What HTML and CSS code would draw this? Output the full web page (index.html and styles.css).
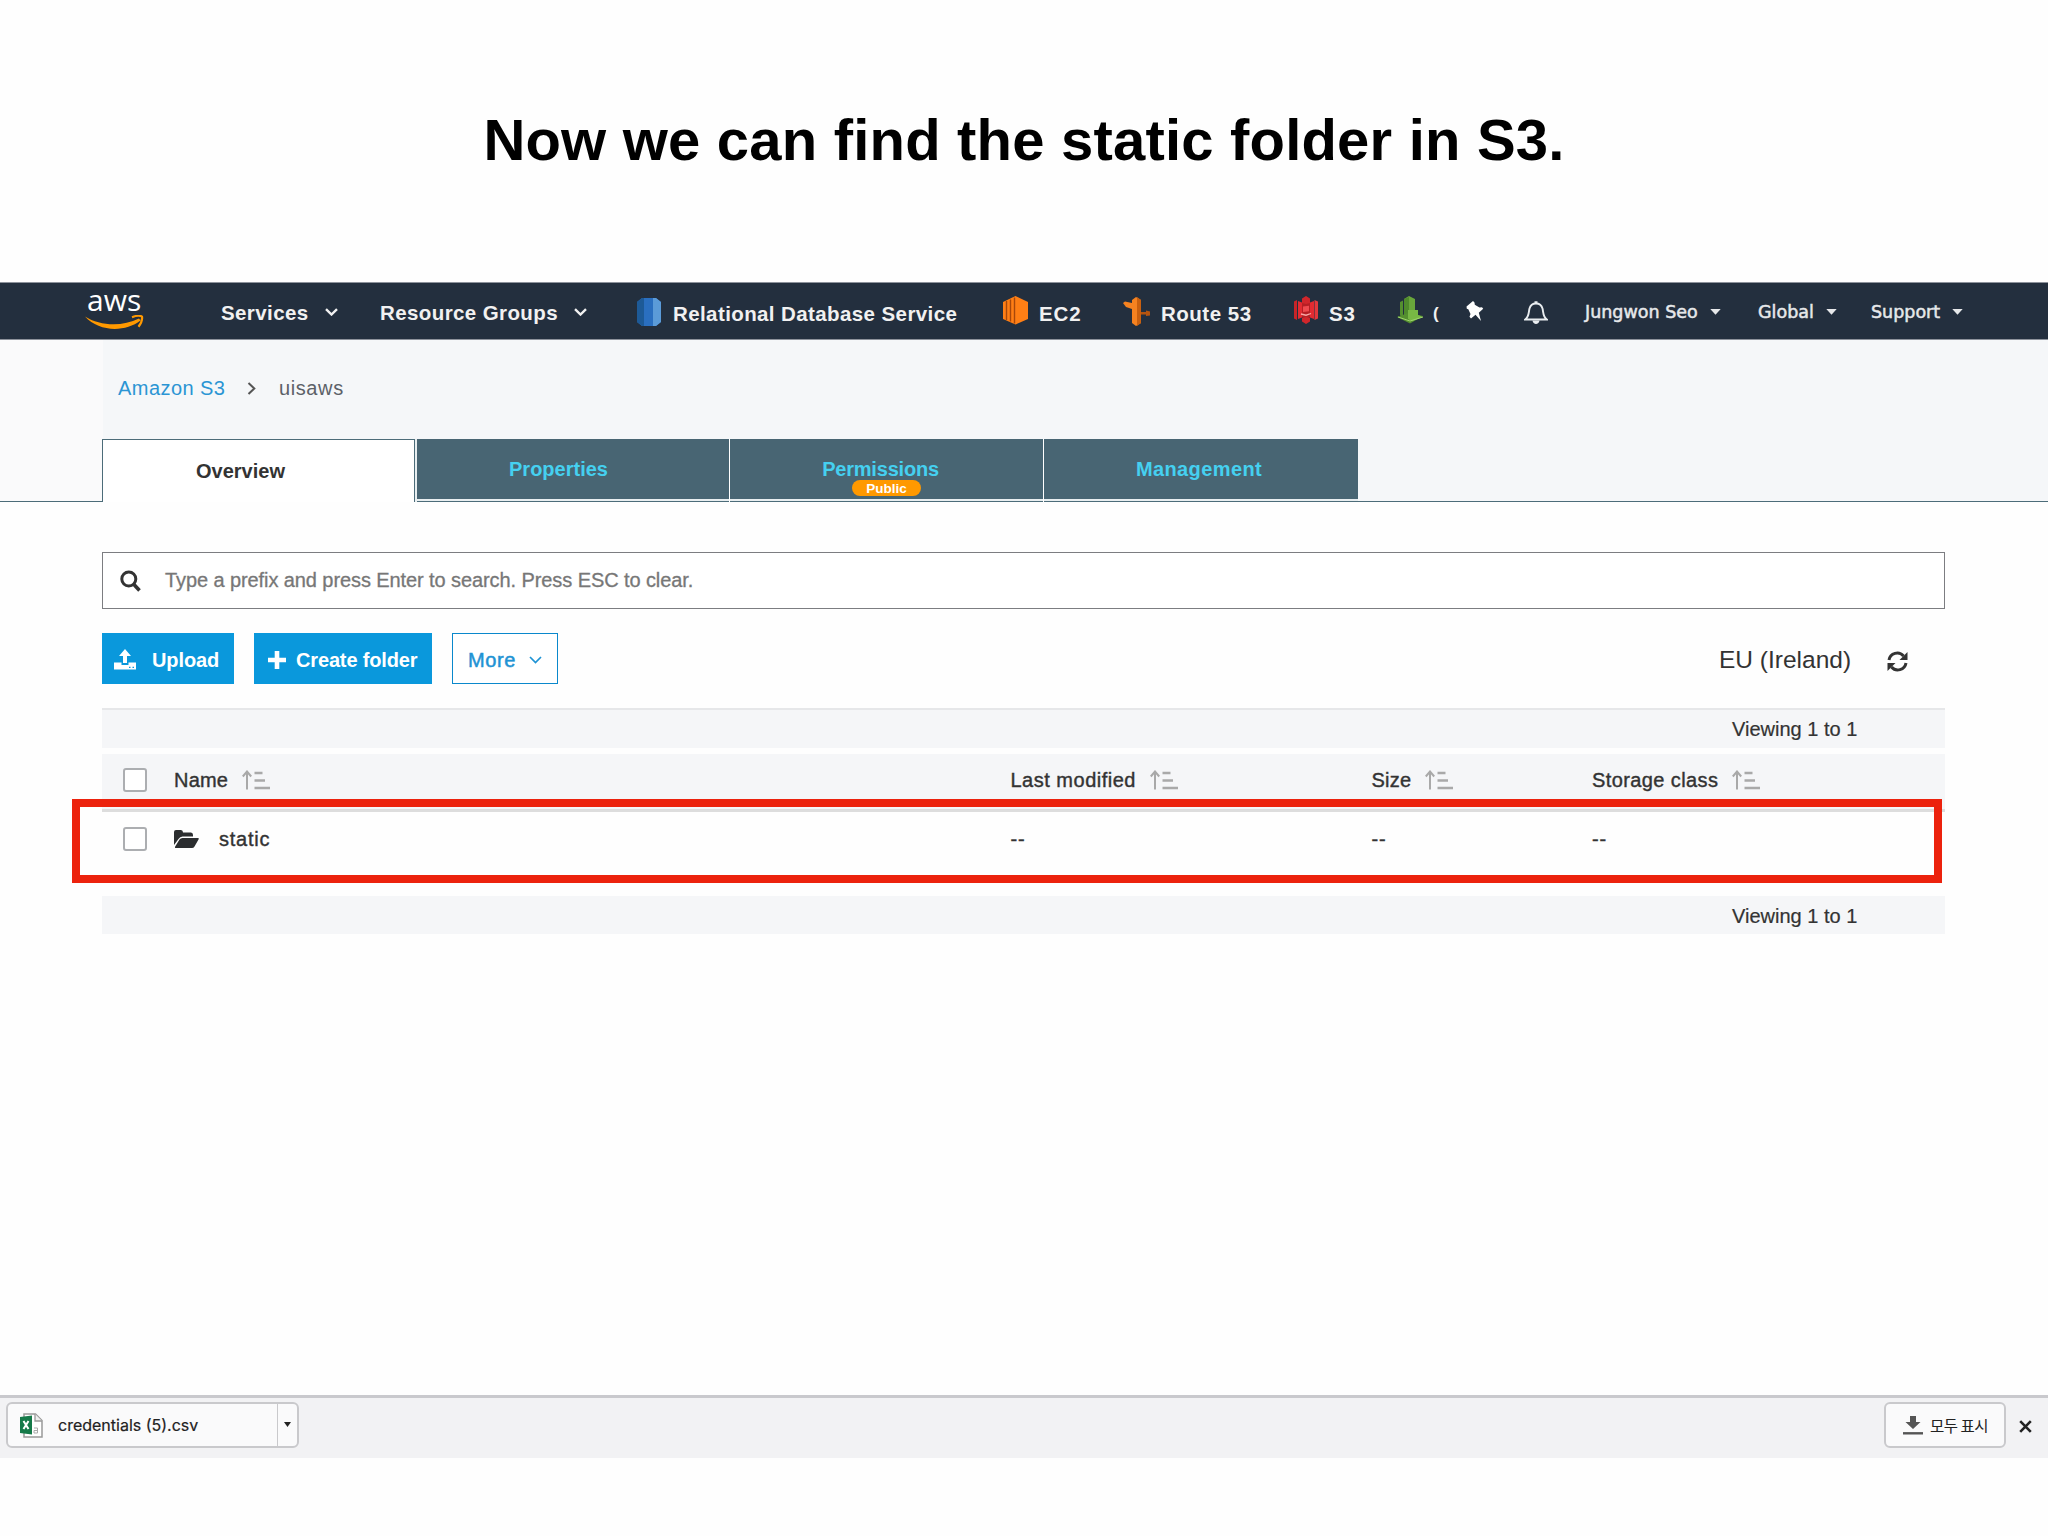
FILE: index.html
```html
<!DOCTYPE html>
<html lang="en">
<head>
<meta charset="utf-8">
<title>Amazon S3 - static folder</title>
<link rel="stylesheet" href="styles.css">
</head>
<body>
<svg class="defs" width="0" height="0">
  <symbol id="chev" viewBox="0 0 13 8"><path d="M1 1.200 6.500 6.500 12 1.200" fill="none" stroke="currentColor" stroke-width="2.400"/></symbol>
  <symbol id="caret" viewBox="0 0 11 6"><path d="M.3 0h10.400L5.500 5.800z" fill="currentColor"/></symbol>
  <symbol id="sort" viewBox="0 0 29 20"><path d="M5 19.500V2M.8 6.500 5 1.500l4.200 5" fill="none" stroke="#a9a9a9" stroke-width="2"/><path d="M12.500 3h8M12.500 10.500h10.500M12.500 18h15.500" stroke="#a9a9a9" stroke-width="2.600"/></symbol>
</svg>

<h1 class="title">Now we can find the static folder in S3.</h1>

<header class="nav">
  <div class="logo">
    <span class="logo-word">aws</span>
    <svg class="smile" width="59" height="16" viewBox="0 0 59 16"><path d="M0 1.500C15 11 37 12 54 3.500l1.500 2C40 17.500 14 17 0 1.500z" fill="#f90"/><path d="M47 2.200c4-1.500 8-1.800 10-.6.5 3-1 7-3.500 10.200" fill="none" stroke="#f90" stroke-width="2.200"/></svg>
  </div>
  <div class="item w-services"><span class="ls4">Services</span><svg class="chev" width="13" height="8"><use href="#chev"/></svg></div>
  <div class="item w-groups"><span class="ls4">Resource Groups</span><svg class="chev" width="13" height="8"><use href="#chev"/></svg></div>
  <div class="item short w-rds">
    <svg class="ico" width="26" height="30" viewBox="0 0 26 30"><path d="M1 5 6 1h14l5 4v20l-5 4H6l-5-4z" fill="#2a6fc0"/><path d="M1 5 6 1h2v28H6l-5-4z" fill="#1d5a97"/><path d="M17 1h3l5 4v20l-5 4h-3z" fill="#5b9bd8"/></svg>
    <span class="ls4">Relational Database Service</span></div>
  <div class="item short w-ec2">
    <svg class="ico" width="25" height="29" viewBox="0 0 25 29"><path d="M0 6 12.500 0 25 6v17l-12.500 5.500L0 23z" fill="#ff7f15"/><path d="M3.500 5v19M7.500 3.500v22M11.500 1.500v26" stroke="#a8480a" stroke-width="1.400"/></svg>
    <span class="ls10">EC2</span></div>
  <div class="item short w-route">
    <svg class="ico" width="27" height="30" viewBox="0 0 27 30"><path d="M9 3l4-3 5 3v23l-5 3-4-3V12L3 10 0 6l2-1.500 7 1.500z" fill="#f58220"/><path d="M14 0l4 3v23l-4 3z" fill="#c9600f"/><path d="M18 15h5v-1.500l4 1v4l-4 .5v-1.500h-5z" fill="#b4540f"/></svg>
    <span class="ls6">Route 53</span></div>
  <div class="item short w-s3">
    <svg class="ico" width="24" height="28" viewBox="0 0 24 28"><path d="M0 5.500 3 4v20l-3-1.500z" fill="#c92428"/><path d="M24 5.500 20.500 4v20l3.500-1.500z" fill="#e4383c"/><path d="M4 5l4 1.500v15L4 23zM20 5l-4 1.500v15l4 1.500z" fill="#e32b31"/><path d="M8 6.500 12 7l4-.5v15l-4 1-4-1z" fill="#b51f24"/><path d="M12 0l4 2.500V7l-4 1-4-1V2.500zM12 28l-4-2.500V22l4-1 4 1v3.500z" fill="#d0262b"/><path d="M9 10.500l6-.8v5.500l-6 .8z" fill="#ef4a4e"/><path d="M7 18l5 1.200 5-1.700" stroke="#f7a8a5" stroke-width="1.300" fill="none"/></svg>
    <span class="ls10">S3</span></div>
  <div class="item short w-green">
    <svg class="ico" width="27" height="28" viewBox="0 0 27 28"><path d="M7 3 12 0l6 3v20l-11-1z" fill="#69a63b"/><path d="M7 3l5-2v22H7z" fill="#4f8a2c"/><path d="M3 6l3-1.500v15H3zM0 21l11-4 15 3-13 7.500z" fill="#548f2f"/><path d="M11 14h10v5l5 2-11 4-4-2z" fill="#78b844"/><path d="M1 21l12 4 13-4" stroke="#9fd36e" fill="none"/></svg>
    <span class="partial">(</span></div>
  <div class="pin"><svg width="19" height="22" viewBox="0 0 19 22"><path d="M1.500 6.500 8 1l1.500 1.500.3 2.200 4.700 2.800 2.500-.3 1.200 1.600-4.400 4 2.200 8.200-5.500-6.200-4.500 3.700-1.500-1.700 1-2.800L3.300 9.200l-1.500-.5z" fill="#fff"/></svg></div>
  <div class="bell"><svg width="24" height="25" viewBox="0 0 24 25"><path d="M1.200 19.500c4-3 3.300-7 4.300-11 .8-3 3-5 6.500-5s5.700 2 6.500 5c1 4 .3 8 4.300 11z" fill="none" stroke="#e9edf0" stroke-width="1.900"/><path d="M10.500 3.500V1.300h3v2.200zM8.500 20.500h7c-.5 4.500-6.500 4.500-7 0z" fill="#e9edf0"/></svg></div>
  <div class="acct w-user"><span>Jungwon Seo</span><svg class="caret" width="11" height="6"><use href="#caret"/></svg></div>
  <div class="acct w-global"><span>Global</span><svg class="caret" width="11" height="6"><use href="#caret"/></svg></div>
  <div class="acct w-support"><span>Support</span><svg class="caret" width="11" height="6"><use href="#caret"/></svg></div>
</header>

<section class="hero">
  <nav class="crumbs">
    <a class="crumb-link">Amazon S3</a>
    <svg width="9" height="13" viewBox="0 0 9 13"><path d="M1.500 1 7.300 6.500 1.500 12" fill="none" stroke="#555" stroke-width="2"/></svg>
    <span class="crumb-cur">uisaws</span>
  </nav>
  <div class="tabs">
    <div class="edge"></div>
    <div class="tab active"><span>Overview</span></div>
    <div class="tab first"><span>Properties</span></div>
    <div class="tab perms"><span class="tight">Permissions</span><b class="badge">Public</b></div>
    <div class="tab manage"><span class="ls4">Management</span></div>
    <div class="edge rest"></div>
  </div>
</section>

<main class="content">
  <div class="search">
    <svg width="22" height="22" viewBox="0 0 22 22"><circle cx="8.800" cy="9" r="7" fill="none" stroke="#333" stroke-width="3"/><path d="M13.500 14l6 6.500" stroke="#333" stroke-width="3.600"/></svg>
    <span>Type a prefix and press Enter to search. Press ESC to clear.</span>
  </div>
  <div class="toolbar">
    <div class="btn upload"><svg width="22" height="21" viewBox="0 0 22 21"><path d="M11 0l6 7h-4v7H9V7H5z" fill="#fff"/><path d="M0 13.500h7.500V16h7v-2.500H22v7H0z" fill="#fff"/><path d="M15 18.300h1.500M18.500 18.300H20" stroke="#0a98dc" stroke-width="1.200"/></svg><span>Upload</span></div>
    <div class="btn create"><svg width="18" height="18" viewBox="0 0 18 18"><path d="M9 0v18M0 9h18" stroke="#fff" stroke-width="4.600"/></svg><span>Create folder</span></div>
    <div class="btn more"><span>More</span><svg class="more-chev" width="13" height="8" viewBox="0 0 13 8"><path d="M1 1l5.500 5.500L12 1" fill="none" stroke="#1f93d4" stroke-width="1.700"/></svg></div>
    <div class="region">EU (Ireland)</div>
    <svg class="refresh" width="21" height="21" viewBox="0 0 21 21"><path d="M2 9a8.300 8.300 0 0 1 14.500-4M19 12a8.300 8.300 0 0 1-14.500 4" fill="none" stroke="#333" stroke-width="3"/><path d="M20.500 1v8h-8zM.5 20v-8h8z" fill="#333"/></svg>
  </div>
  <div class="band top"><span>Viewing 1 to 1</span></div>
  <div class="grid head">
    <i class="box"></i>
    <div class="cell"><span class="ls2">Name</span><svg class="sort" width="29" height="20"><use href="#sort"/></svg></div>
    <div class="cell"><span class="ls6">Last modified</span><svg class="sort" width="29" height="20"><use href="#sort"/></svg></div>
    <div class="cell"><span class="ls2">Size</span><svg class="sort" width="29" height="20"><use href="#sort"/></svg></div>
    <div class="cell"><span class="ls4">Storage class</span><svg class="sort" width="29" height="20"><use href="#sort"/></svg></div>
  </div>
  <div class="grid row">
    <i class="box"></i>
    <div class="cell"><svg class="folder" width="25" height="18" viewBox="0 0 25 18"><path d="M0 15V2Q0 0 2 0h5q2 0 2 2.500h8q2 0 2 2.500v1.500H8.500Q6 6.500 4.500 9z" fill="#2b2d2f"/><path d="M8.500 8H24q1.300 0 .5 1.400l-4 7q-.9 1.600-2.500 1.600H2q-1.600 0-.8-1.400l4.300-7Q6.500 8 8.500 8z" fill="#2b2d2f"/></svg><span class="ls8">static</span></div>
    <div class="cell dash">--</div>
    <div class="cell dash">--</div>
    <div class="cell dash">--</div>
  </div>
  <div class="band bottom"><span>Viewing 1 to 1</span></div>
</main>
<div class="highlight"></div>

<footer class="downloads">
  <div class="chip file">
    <svg width="23" height="25" viewBox="0 0 23 25"><path d="M4 1h11.500L22 7.500V24H4z" fill="#fff" stroke="#999" stroke-width="1.500"/><path d="M15 1v7h7" fill="#eee" stroke="#999" stroke-width="1.300"/><path d="M14 15h3.500v5H14v-2.500h3" fill="none" stroke="#aaa"/><path d="M0 4l12-1.500v19L0 20z" fill="#157a49"/><path d="M3.500 8l5 8M8.500 8l-5 8" stroke="#fff" stroke-width="2"/></svg>
    <span>credentials (5).csv</span>
    <div class="drop"><svg width="7" height="5" viewBox="0 0 7 5"><path d="M0 0h7L3.500 5z" fill="#222"/></svg></div>
  </div>
  <div class="chip all">
    <svg width="20" height="19" viewBox="0 0 20 19"><path d="M7 0h6v6h4.500L10 13 2.500 6H7z" fill="#555"/><path d="M0 17.300h20" stroke="#555" stroke-width="2.400"/></svg>
    <span>모두 표시</span>
  </div>
  <svg class="close" width="13" height="13" viewBox="0 0 13 13"><path d="M1.200 1.200l10.600 10.600M11.800 1.200 1.200 11.800" stroke="#222" stroke-width="2.600"/></svg>
</footer>
</body>
</html>
```
FILE: styles.css
```css
* { box-sizing: border-box; }
body {
  margin: 0;
  width: 2048px;
  height: 1536px;
  overflow: hidden;
  position: relative;
  display: flex;
  flex-direction: column;
  background: #fefefe;
  color: #333;
  font: 20px/24px "Liberation Sans", Arial, sans-serif;
  white-space: nowrap;
}
.defs { position: absolute; }
svg { flex: none; display: block; }
.ls2 { letter-spacing: .2px; }
.ls4 { letter-spacing: .4px; }
.ls6 { letter-spacing: .5px; }
.ls8 { letter-spacing: .75px; }
.ls10 { letter-spacing: .9px; }

.title {
  margin: 0;
  height: 282px;
  padding-top: 105px;
  text-align: center;
  color: #000;
  font-size: 58px;
  line-height: 70px;
  font-weight: bold;
  letter-spacing: .2px;
}

.nav {
  display: flex;
  height: 58px;
  background: #232f3e;
  border-top: 1px solid #8d929b;
  border-bottom: 1px solid #8d929b;
  color: #f1f1f1;
}
.logo { width: 221px; padding-left: 85px; }
.logo-word {
  display: block;
  margin: 1px 0 0 2px;
  height: 31px;
  font: 30px/32px "Open Sans", "Noto Sans", sans-serif;
  font-weight: 500;
  color: #fff;
}
.smile { margin-top: 0; }
.item {
  display: flex;
  align-items: center;
  padding-top: 4px;
  font-size: 20.5px;
  font-weight: bold;
}
.item.short { padding-top: 5px; }
.chev { margin: -3px 0 0 16px; }
.ico { margin: -4px 11px 0 0; }
.w-services { width: 159px; }
.w-groups { width: 256px; }
.w-rds { width: 367px; }
.w-ec2 { width: 120px; }
.w-ec2 .ico { margin-top: -6px; }
.w-route { width: 171px; }
.w-s3 { width: 103px; }
.w-green { width: 68px; }
.w-s3 .ico, .w-green .ico { margin-top: -7px; }
.w-green .ico { margin-right: 9px; }
.partial { font-size: 17px; line-height: 20px; }
.pin { width: 59px; padding-top: 17px; }
.bell { width: 61px; padding-top: 17px; }
.acct {
  display: flex;
  align-items: center;
  padding-top: 2px;
  font: 17.5px/24px "DejaVu Sans", Verdana, sans-serif;
  color: #e6e8ea;
  -webkit-text-stroke: .5px #e6e8ea;
}
.caret { margin: 0 0 0 12px; }
.w-user { width: 173px; }
.w-global { width: 113px; }

.hero {
  height: 162px;
  background: linear-gradient(90deg, #fafafb 0 103px, #f5f7f9 103px);
}
.crumbs { display: flex; align-items: center; height: 99px; padding: 0 0 3px 118px; }
.crumb-link { width: 129px; color: #2b95d4; letter-spacing: .45px; }
.crumb-cur { margin-left: 23px; color: #5c6168; letter-spacing: .6px; }
.tabs { display: flex; height: 63px; }
.edge { width: 102px; border-bottom: 1px solid #4c6c79; }
.edge.rest { flex: 1; }
.tab {
  width: 314px;
  display: flex;
  flex-direction: column;
  align-items: center;
  padding-top: 18px;
  color: #45d0f0;
  font-weight: bold;
  background: #486573;
  border-right: 1px solid #fff;
  box-shadow: inset 0 -1px #4c6c79, inset 0 -3px #e8eef0;
}
.tab.first { width: 315px; padding-right: 29px; border-left: 2px solid #e8eef0; }
.tab.perms { padding-right: 12px; }
.tab.manage { padding-right: 4px; border-right: 0; }
.tab.active {
  width: 313px;
  padding: 19px 36px 0 0;
  background: #fff;
  color: #333;
  border: 1px solid #4c6c79;
  border-bottom: 0;
  box-shadow: none;
}
.tab .tight { letter-spacing: -.2px; }
.badge {
  height: 16px;
  width: 69px;
  margin: -1px 0 0 12px;
  text-align: center;
  border-radius: 8px;
  background: #ff9900;
  color: #fff;
  font-size: 13.500px;
  line-height: 17px;
}

.content { padding: 50px 103px 0 102px; height: 893px; }
.search {
  display: flex;
  align-items: center;
  height: 57px;
  padding-left: 17px;
  border: 1px solid #7c7d81;
  background: #fff;
}
.search span { margin: -2px 0 0 23px; color: #777; letter-spacing: -.09px; -webkit-text-stroke: .3px #777; }
.toolbar { display: flex; margin-top: 24px; height: 51px; }
.btn {
  display: flex;
  align-items: center;
  padding-top: 2px;
  background: #0a98dc;
  color: #fff;
  font-weight: bold;
}
.upload { width: 132px; padding-left: 12px; }
.upload span { margin-left: 16px; letter-spacing: -.1px; }
.create { width: 178px; margin: 0 20px; padding-left: 14px; }
.create span { margin-left: 10px; letter-spacing: -.15px; }
.more {
  width: 106px;
  padding-left: 15px;
  background: #fff;
  color: #1f93d4;
  border: 1px solid #0a88cc;
  font-weight: normal;
  letter-spacing: .6px;
  -webkit-text-stroke: .5px #1f93d4;
}
.more-chev { margin-left: 13px; }
.region { width: 168px; margin-left: auto; font-size: 24.500px; line-height: 54px; }
.refresh { margin: 18px 37px 0 0; }
.band {
  display: flex;
  align-items: center;
  padding-left: 1630px;
  background: #f5f6f8;
  height: 40px;
}
.band.top { margin: 24px 0 6px; border-top: 2px solid #e6e7e9; }
.band.bottom { height: 38px; margin-top: 83px; padding-top: 1px; }
.band span { -webkit-text-stroke: .2px #333; }
.grid {
  display: grid;
  grid-template-columns: 51px 836.500px 361px 220.500px 1fr;
  padding-left: 21px;
  align-items: center;
}
.grid.head { height: 58px; padding-bottom: 3px; background: #f5f6f8; border-bottom: 3px solid #ddd; }
.grid.row { height: 54px; margin-bottom: -53px; padding-bottom: 1px; }
.box { width: 24px; height: 24px; background: #fff; border: 2px solid #acaeb1; border-radius: 3px; }
.cell { display: flex; align-items: center; -webkit-text-stroke: .4px #333; }
.dash { letter-spacing: .8px; }
.sort { margin-left: 14px; }
.folder { margin-right: 20px; }

.highlight {
  position: absolute;
  left: 72px;
  top: 799px;
  width: 1870px;
  height: 84px;
  border: 8px solid #ec220d;
}

.downloads {
  display: flex;
  height: 63px;
  padding: 4px 16px 0 6px;
  background: #f2f2f4;
  border-top: 3px solid #c9c9cd;
  color: #222;
}
.chip {
  display: flex;
  align-items: center;
  height: 46px;
  border: 2px solid #c9c9cc;
  border-radius: 6px;
  background: #fafafb;
}
.file { width: 293px; padding-left: 12px; font: 16px/24px Inter, sans-serif; -webkit-text-stroke: .2px #222; }
.file span { margin-left: 15px; }
.drop {
  display: flex;
  align-items: center;
  justify-content: center;
  box-sizing: content-box;
  width: 19px;
  height: 40px;
  margin-left: auto;
  padding-bottom: 2px;
  border-left: 1px solid #c9c9cc;
}
.all { width: 122px; margin-left: auto; padding-left: 17px; font: 15.500px/24px "Noto Sans CJK KR", sans-serif; }
.all span { margin-left: 7px; letter-spacing: -.5px; }
.close { margin: 18px 0 0 13px; }
```
